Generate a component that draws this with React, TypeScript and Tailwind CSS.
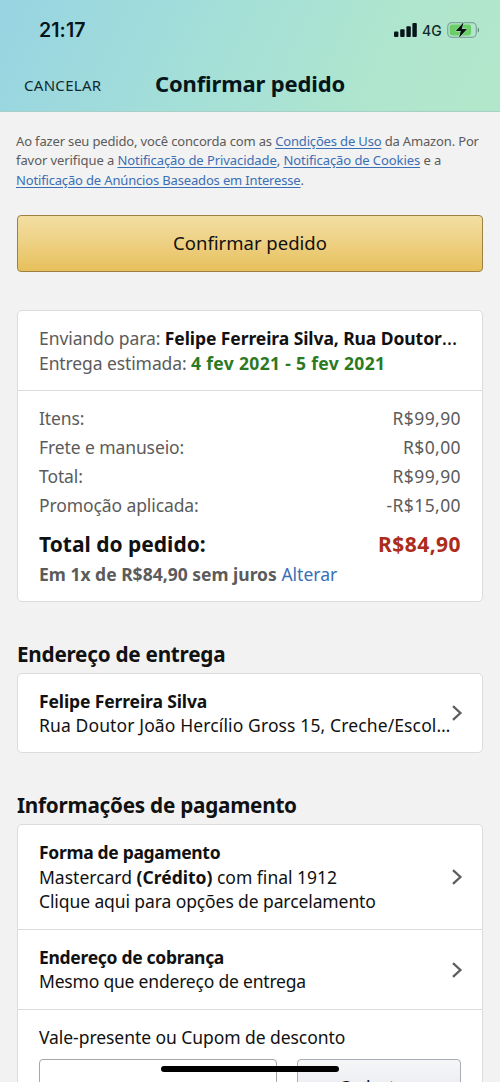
import type { ReactNode } from "react";

const summary = [
  { label: "Itens:", value: "R$99,90" },
  { label: "Frete e manuseio:", value: "R$0,00" },
  { label: "Total:", value: "R$99,90" },
  { label: "Promoção aplicada:", value: "-R$15,00" },
];

const StatusIcons = () => (
  <div className="flex items-center">
    <svg width="23" height="14" viewBox="0 0 23 14" fill="#06151a">
      <rect x="0" y="8.6" width="4.4" height="5.4" rx="1" />
      <rect x="6.2" y="6.2" width="4.4" height="7.8" rx="1" />
      <rect x="12.4" y="3.2" width="4.4" height="10.8" rx="1" />
      <rect x="18.4" y="0" width="4.4" height="14" rx="1" />
    </svg>
    <span className="ml-[5px] w-5 whitespace-nowrap pt-px font-['Inter',sans-serif] text-[14px] font-medium leading-4 text-[#12292b]">
      4G
    </span>
    <svg className="ml-[5px]" width="33" height="18" viewBox="0 0 33 18">
      <rect x="0.7" y="1.7" width="28.6" height="14.6" rx="4.2" fill="none" stroke="#7fa79a" strokeWidth="1.2" />
      <rect x="2.6" y="3.6" width="21.5" height="10.8" rx="2.4" fill="#6cce66" />
      <path d="M30.8 6.4c1.6.5 1.6 4.7 0 5.2z" fill="#5f8477" />
      <path
        d="M16.6 1.2 8.8 10h5L12 16.8 20 8h-5.2z"
        fill="#06120c"
        stroke="#b0e5cb"
        strokeWidth="1"
        paintOrder="stroke"
      />
    </svg>
  </div>
);

const Chevron = () => (
  <svg className="shrink-0" width="12" height="18" viewBox="0 0 12 18" fill="none">
    <path d="M2 2.2 9.4 9 2 15.8" stroke="#5e5e5e" strokeWidth="2.3" />
  </svg>
);

const TextLink = ({ children }: { children: ReactNode }) => (
  <a href="#" className="text-[#3a6fb5] underline underline-offset-2">
    {children}
  </a>
);

const Header = () => (
  <header className="h-28 border-b border-[#a9cfc9] bg-[linear-gradient(115deg,#97d4e2_0%,#a4dfd8_42%,#b0e6cd_78%,#b2e7cb_100%)] pt-5 text-[#06151a]">
    <div className="flex h-5 items-center justify-between pl-[39px] pr-[20px]">
      <span className="font-['Inter',sans-serif] text-[19.5px] font-semibold tracking-[0.1px]">
        21:17
      </span>
      <StatusIcons />
    </div>
    <div className="mt-[28px] flex h-[30px] items-center">
      <button className="ml-6 w-[131px] whitespace-nowrap pt-1 text-left text-[15px] tracking-[0.3px] text-[#12292f]">
        CANCELAR
      </button>
      <h1 className="whitespace-nowrap text-[22px] font-bold tracking-[-0.15px]">
        Confirmar pedido
      </h1>
    </div>
  </header>
);

const OrderSummary = () => (
  <section className="mt-[38px] h-[292px] rounded-[5px] border border-[#dcdcdc] bg-white text-[#5b5b5b]">
    <div className="h-20 whitespace-nowrap border-b border-[#dcdcdc] px-[21px] pt-[15px]">
      <p>
        <span className="tracking-[-0.08px]">Enviando para: </span>
        <strong className="tracking-[-0.08px] text-[#111]">
          Felipe Ferreira Silva, Rua Doutor
        </strong>
        <span className="text-[19.5px] leading-none text-[#111]">…</span>
      </p>
      <p>
        <span className="tracking-[-0.1px]">Entrega estimada: </span>
        <strong className="tracking-[0.33px] text-[#2c7a1f]">4 fev 2021 - 5 fev 2021</strong>
      </p>
    </div>
    <div className="px-[21px] pt-3">
      {summary.map((row) => (
        <div key={row.label} className="flex h-[29px] items-center justify-between">
          <span className="tracking-[-0.1px]">{row.label}</span>
          <span className="tracking-[0.4px]">{row.value}</span>
        </div>
      ))}
      <div className="mt-[9px] flex h-8 items-center justify-between text-[21px] font-bold">
        <span className="text-[#111]">Total do pedido:</span>
        <span className="tracking-[0.45px] text-[#ad2b1a]">R$84,90</span>
      </div>
      <p className="mt-0.5">
        <strong>Em 1x de R$84,90 sem juros</strong> <a href="#" className="text-[#3a6fb5]">Alterar</a>
      </p>
    </div>
  </section>
);

const SectionTitle = ({ children }: { children: ReactNode }) => (
  <h2 className="mt-[38px] h-[33px] text-[20.7px] font-bold leading-7 tracking-[-0.24px]">
    {children}
  </h2>
);

const App = () => {
  return (
    <div className="h-[1082px] w-[500px] overflow-hidden bg-[#f2f2f2] font-['Noto_Sans',sans-serif] text-[17.5px] leading-[24.4px] text-[#111]">
      <Header />
      <main className="px-[17px] pt-5">
        <p className="-ml-px whitespace-nowrap text-[13px] leading-[19.4px] tracking-[-0.16px] text-[#5b5b5b]">
          Ao fazer seu pedido, você concorda com as <TextLink>Condições de Uso</TextLink> da Amazon. Por
          <br />
          <span className="tracking-[-0.08px]">
            favor verifique a <TextLink>Notificação de Privacidade</TextLink>,{" "}
            <TextLink>Notificação de Cookies</TextLink> e a
          </span>
          <br />
          <TextLink>Notificação de Anúncios Baseados em Interesse</TextLink>.
        </p>

        <button className="mt-[25px] h-[57px] w-full rounded-[4px] border border-[#9c8142] bg-linear-to-b from-[#f3dfa3] to-[#e7c05b] pb-0.5 text-[18.5px] text-[#111]">
          Confirmar pedido
        </button>

        <OrderSummary />

        <SectionTitle>Endereço de entrega</SectionTitle>
        <section className="flex h-20 items-center rounded-[5px] border border-[#dcdcdc] bg-white pl-[21px]">
          <div className="w-[412px] whitespace-nowrap">
            <p className="font-bold tracking-[-0.12px]">Felipe Ferreira Silva</p>
            <p className="tracking-[0.12px]">Rua Doutor João Hercílio Gross 15, Creche/Escol…</p>
          </div>
          <Chevron />
        </section>

        <SectionTitle>Informações de pagamento</SectionTitle>
        <section className="h-[300px] rounded-[5px] border border-[#dcdcdc] bg-white">
          <div className="flex h-[105px] items-center border-b border-[#dcdcdc] pl-[21px]">
            <div className="w-[412px] whitespace-nowrap pb-px">
              <p className="font-bold tracking-[-0.32px]">Forma de pagamento</p>
              <p>
                Mastercard <strong>(Crédito)</strong> com final 1912
              </p>
              <p className="tracking-[-0.1px]">Clique aqui para opções de parcelamento</p>
            </div>
            <Chevron />
          </div>
          <div className="flex h-20 items-center border-b border-[#dcdcdc] pl-[21px]">
            <div className="w-[412px] whitespace-nowrap pb-px">
              <p className="font-bold tracking-[-0.3px]">Endereço de cobrança</p>
              <p className="tracking-[-0.2px]">Mesmo que endereço de entrega</p>
            </div>
            <Chevron />
          </div>
          <div className="px-[21px] pt-[15px]">
            <p className="tracking-[-0.06px]">Vale-presente ou Cupom de desconto</p>
            <div className="mt-[9px] flex justify-between">
              <div className="h-14 w-[238px] rounded-[4px] border border-[#a6a6a6] bg-white pl-2 pt-[18px] text-[#777]">
                Inserir código
              </div>
              <button className="h-14 w-[164px] rounded-[4px] border border-[#a9adb3] bg-linear-to-b from-[#f5f6f8] to-[#e3e5e9] pt-0.5">
                Cadastrar
              </button>
            </div>
          </div>
        </section>
      </main>
      {/* iOS home indicator */}
      <div className="fixed left-[161px] top-[1066px] h-1.5 w-[178px] rounded-full bg-black" />
    </div>
  );
};

export default App;
